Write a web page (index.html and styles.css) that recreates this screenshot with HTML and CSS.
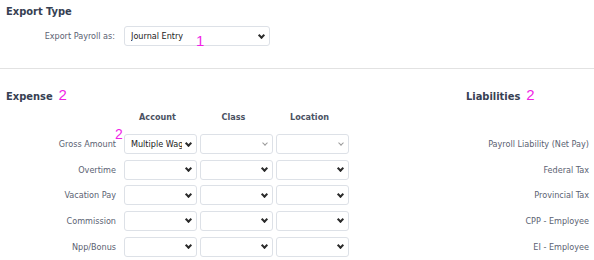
FILE: index.html
```html
<!DOCTYPE html>
<html lang="en">
  <head>
    <meta charset="UTF-8" />
    <meta name="viewport" content="width=device-width, initial-scale=1.0" />
    <title>Payroll Export</title>
    <link rel="stylesheet" href="styles.css">
  </head>
  <body>
    <section class="export">
      <h2 class="title">Export Type</h2>
      <div class="field">
        <label class="field-label">Export Payroll as:</label>
        <span class="pick">
          <select class="select wide">
            <option>Journal Entry</option>
            <option>Paycheque</option>
          </select>
          <span class="mark mark-export">1</span>
        </span>
      </div>
    </section>

    <hr class="rule">

    <section class="mapping">
      <h2 class="title expense-title">Expense<span class="note">2</span></h2>
      <h2 class="title liab-title">Liabilities<span class="note">2</span></h2>

      <span class="col-head head-1">Account</span>
      <span class="col-head head-2">Class</span>
      <span class="col-head head-3">Location</span>

      <!-- row 1 -->
      <label class="row-label">Gross Amount</label>
      <span class="pick">
        <select class="select"><option>Multiple Wages</option></select>
        <span class="mark mark-row">2</span>
      </span>
      <span class="pick soft"><select class="select"><option></option></select></span>
      <span class="pick soft"><select class="select"><option></option></select></span>
      <span class="liab-label">Payroll Liability (Net Pay)</span>

      <!-- row 2 -->
      <label class="row-label">Overtime</label>
      <span class="pick"><select class="select"><option></option></select></span>
      <span class="pick"><select class="select"><option></option></select></span>
      <span class="pick"><select class="select"><option></option></select></span>
      <span class="liab-label">Federal Tax</span>

      <!-- row 3 -->
      <label class="row-label">Vacation Pay</label>
      <span class="pick"><select class="select"><option></option></select></span>
      <span class="pick"><select class="select"><option></option></select></span>
      <span class="pick"><select class="select"><option></option></select></span>
      <span class="liab-label">Provincial Tax</span>

      <!-- row 4 -->
      <label class="row-label">Commission</label>
      <span class="pick"><select class="select"><option></option></select></span>
      <span class="pick"><select class="select"><option></option></select></span>
      <span class="pick"><select class="select"><option></option></select></span>
      <span class="liab-label">CPP - Employee</span>

      <!-- row 5 -->
      <label class="row-label">Npp/Bonus</label>
      <span class="pick"><select class="select"><option></option></select></span>
      <span class="pick"><select class="select"><option></option></select></span>
      <span class="pick"><select class="select"><option></option></select></span>
      <span class="liab-label">EI - Employee</span>
    </section>
  </body>
</html>
```

FILE: styles.css
```css
* {
  margin: 0;
  padding: 0;
  box-sizing: border-box;
}

body {
  background: #fff;
  font-family: "DejaVu Sans Condensed", "DejaVu Sans", sans-serif;
  font-stretch: condensed;
  font-size: 9px;
  color: #5b6272;
  width: 594px;
  height: 260px;
  overflow: hidden;
}

.title {
  font-size: 11px;
  font-weight: bold;
  line-height: 14px;
  color: #364052;
}

.note {
  font-family: "Liberation Sans", Arial, sans-serif;
  font-stretch: normal;
  font-weight: normal;
  font-size: 15px;
  line-height: 10px;
  color: #f01fe6;
  margin-left: 6px;
}

/* export type block */
.export {
  padding: 5px 5px 0 6px;
}

.field {
  display: flex;
  align-items: center;
  gap: 3px;
  margin-top: 7px;
}

.field-label {
  width: 115px;
  padding-right: 6px;
  text-align: right;
}

/* select with drawn chevron */
.pick {
  position: relative;
  display: block;
}

.pick::after {
  content: "";
  position: absolute;
  right: 6px;
  top: 6.5px;
  width: 3px;
  height: 3px;
  border-right: 2px solid #2b2b2b;
  border-bottom: 2px solid #2b2b2b;
  transform: rotate(45deg);
  pointer-events: none;
}

.pick.soft::after {
  border-color: #9a9a9a;
  border-width: 0 1.4px 1.4px 0;
}

.select {
  display: block;
  width: 73px;
  height: 20px;
  border: 1px solid #dde1e7;
  border-radius: 3px;
  background: #fff;
  appearance: none;
  -webkit-appearance: none;
  font-family: "DejaVu Sans Condensed", "DejaVu Sans", sans-serif;
  font-stretch: condensed;
  font-size: 9px;
  color: #222;
  padding: 0 14px 0 6px;
  outline: none;
}

.select.wide {
  width: 146px;
}

.mark {
  position: absolute;
  font-family: "Liberation Sans", Arial, sans-serif;
  color: #f01fe6;
  pointer-events: none;
}

.mark-export {
  left: 72px;
  top: 7px;
  font-size: 15px;
  line-height: 15px;
}

.mark-row {
  left: -9px;
  top: -7px;
  font-size: 14px;
  line-height: 14px;
}

.rule {
  border: none;
  border-top: 1px solid #e2e2e2;
  margin-top: 22px;
}

/* expense / liabilities grid */
.mapping {
  display: grid;
  grid-template-columns: 115px 73px 73px 73px 1fr 123px;
  grid-template-rows: 14px 19px repeat(5, 20px);
  column-gap: 3px;
  row-gap: 5.6px;
  padding: 21px 5px 0 6px;
}

.expense-title {
  grid-column: 1 / 5;
}

.liab-title {
  grid-column: 6;
}

.col-head {
  font-weight: bold;
  color: #4b5263;
  text-align: center;
  line-height: 14px;
  padding-right: 6px;
}

.head-1 { grid-column: 2; }
.head-2 { grid-column: 3; }
.head-3 { grid-column: 4; }

.row-label {
  grid-column: 1;
  align-self: center;
  text-align: right;
  padding-right: 5px;
}

.liab-label {
  grid-column: 6;
  align-self: center;
  text-align: right;
}
```
